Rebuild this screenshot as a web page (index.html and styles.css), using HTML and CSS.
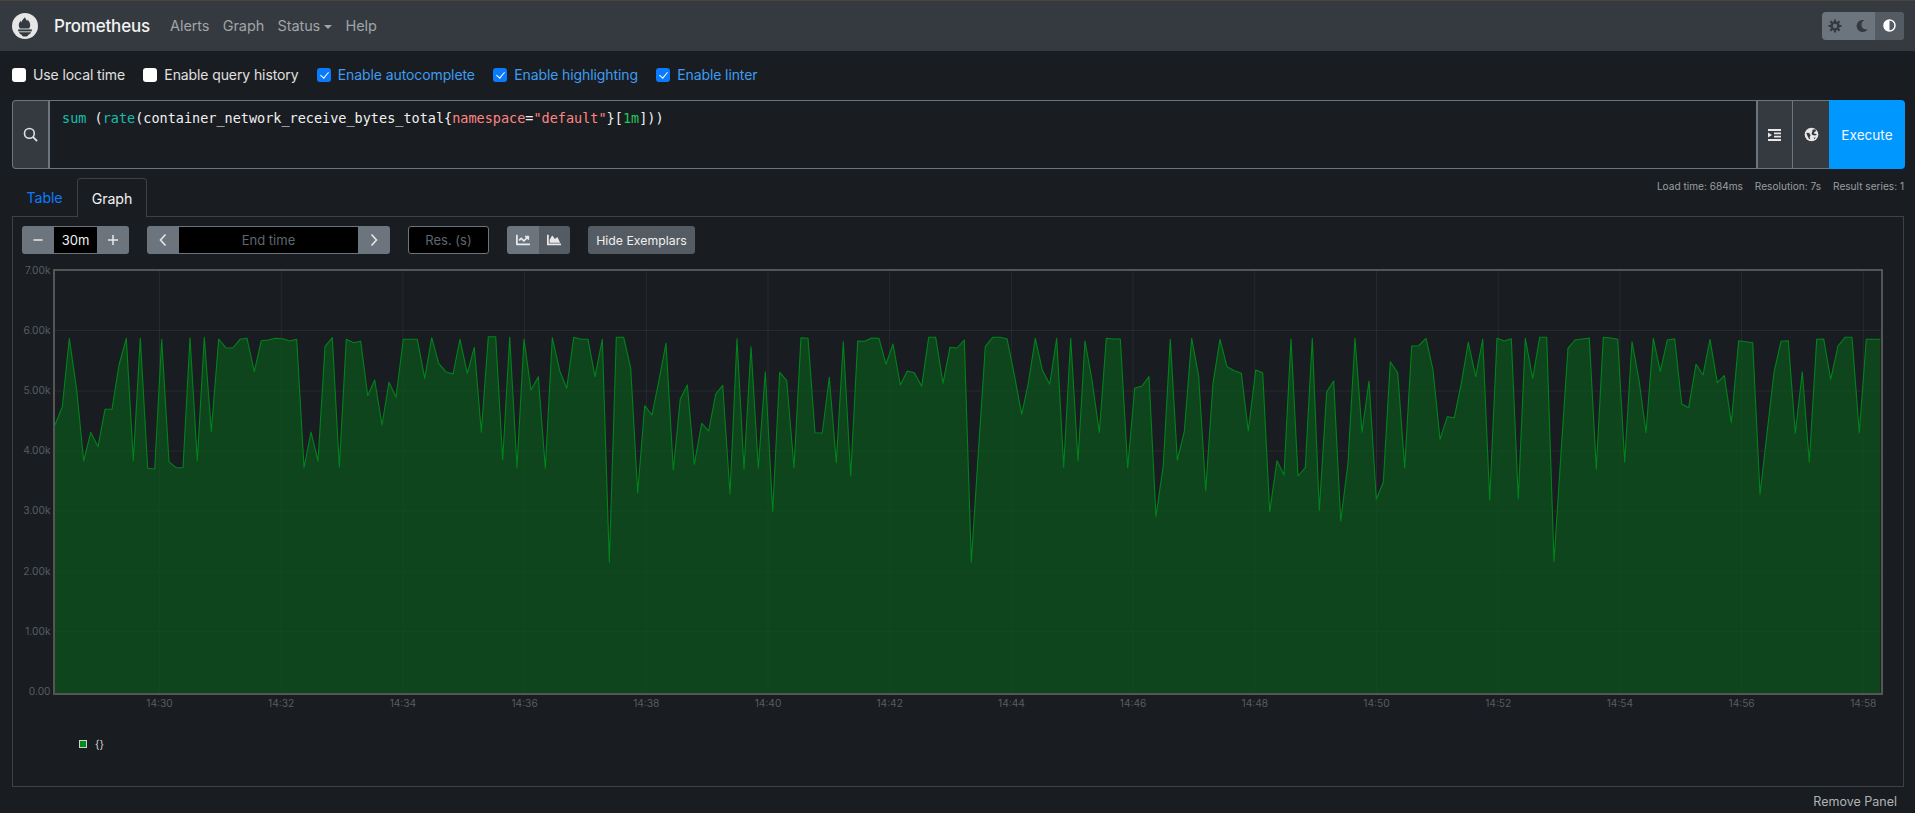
FILE: index.html
```html
<!DOCTYPE html>
<html lang="en">
<head>
<meta charset="utf-8">
<title>Prometheus Time Series Collection and Processing Server</title>
<link rel="stylesheet" href="styles.css">
</head>
<body>
<nav class="navbar">
  <a class="brand">
    <svg class="logo" viewBox="0 0 26 26" width="26" height="26">
      <circle cx="13" cy="13" r="13" fill="#e6e6e6"/>
      <path fill="#343a40" d="M13 4.2c.5 2 1.6 2.7 2.2 4 .3-.6.4-1.1.3-1.7 1.400 1.500 2.700 3.300 2.700 5.500 0 1.400-.5 2.500-1.100 3.600H8c-.7-1.100-1.200-2.200-1.200-3.600 0-1.700.9-3 1.900-4.300.1.800.3 1.300.7 1.800.2-2 1.500-3.300 3.600-5.300z"/>
      <rect x="6.200" y="16.400" width="13.600" height="2" fill="#343a40"/>
      <path fill="#343a40" d="M7 19.200h12c-.4 1.300-1.300 2.100-2.500 2.500-.6 1.200-1.800 1.900-3.500 1.900s-2.900-.7-3.500-1.900C8.300 21.300 7.400 20.500 7 19.200z"/>
    </svg>
    <span class="brand-name">Prometheus</span>
  </a>
  <a class="nav-link">Alerts</a>
  <a class="nav-link">Graph</a>
  <a class="nav-link">Status<i class="caret"></i></a>
  <a class="nav-link">Help</a>
  <div class="theme">
    <button class="theme-btn"><svg viewBox="0 0 16 16" width="14" height="14"><g stroke="#343a40" stroke-width="2.400"><path d="M8 .5v15M.5 8h15M2.700 2.700l10.600 10.600M13.300 2.700L2.700 13.300"/></g><circle cx="8" cy="8" r="5.400" fill="#343a40"/><circle cx="8" cy="8" r="2.500" fill="#6c757d"/></svg></button>
    <button class="theme-btn"><svg viewBox="0 0 512 512" width="12" height="12"><path fill="#343a40" d="M283.211 512c78.962 0 151.079-35.925 198.857-94.792 7.068-8.708-.639-21.43-11.562-19.35-124.203 23.654-238.262-71.576-238.262-196.954 0-72.222 38.662-138.635 101.498-174.394 9.686-5.512 7.25-20.197-3.756-22.23A258.156 258.156 0 0 0 283.211 0c-141.309 0-256 114.511-256 256 0 141.309 114.511 256 256 256z"/></svg></button>
    <button class="theme-btn theme-active"><svg viewBox="0 0 16 16" width="13" height="13"><circle cx="8" cy="8" r="6.800" fill="none" stroke="#fff" stroke-width="1.800"/><path fill="#fff" d="M8 1.200a6.800 6.800 0 0 0 0 13.600z"/></svg></button>
  </div>
</nav>

<main class="page">
  <div class="options">
    <label class="check"><input type="checkbox"><span>Use local time</span></label>
    <label class="check"><input type="checkbox"><span>Enable query history</span></label>
    <label class="check on"><input type="checkbox" checked><span>Enable autocomplete</span></label>
    <label class="check on"><input type="checkbox" checked><span>Enable highlighting</span></label>
    <label class="check on"><input type="checkbox" checked><span>Enable linter</span></label>
  </div>

  <div class="query">
    <div class="addon addon-search">
      <svg viewBox="0 0 16 16" width="15" height="15"><circle cx="6.800" cy="6.800" r="5.200" fill="none" stroke="#e0e0e0" stroke-width="1.700"/><path d="M10.600 10.600L15 15" stroke="#e0e0e0" stroke-width="2"/></svg>
    </div>
    <div class="code"><span class="fn">sum</span> (<span class="fn">rate</span>(container_network_receive_bytes_total{<span class="lbl">namespace</span>=<span class="str">"default"</span>}[<span class="num">1m</span>]))</div>
    <div class="addon addon-r">
      <svg viewBox="0 0 14 14" width="14" height="14"><path fill="#e8e8e8" d="M0 1h13v2H0zM6 4.500h7v1.700H6zM6 7.800h7v1.700H6zM0 11h13v2H0zM0 4.600L4 7 0 9.400z"/></svg>
    </div>
    <div class="addon addon-r addon-globe">
      <svg viewBox="0 0 16 16" width="15" height="15"><circle cx="8" cy="8" r="7.300" fill="#e8e8e8"/><path fill="#343a40" d="M2.500 6.500l2-.5 1.500 1 1 2-1 2 .7 2-1.500-.6-1.500-2.800zM9 3l3-.5 1 1.500-2 1.500-.5 1.500 2.500.500.500 1-2 .500-2.500-.5-1-1.500 1-2.500zM10.500 11.500l2-.5-1.500 2z"/></svg>
    </div>
    <button class="execute">Execute</button>
  </div>

  <div class="tabs-row">
    <div class="tabs">
      <a class="tab">Table</a>
      <a class="tab tab-active">Graph</a>
    </div>
    <div class="stats">
      <span>Load time: 684ms</span>
      <span>Resolution: 7s</span>
      <span>Result series: 1</span>
    </div>
  </div>

  <section class="panel">
    <div class="controls">
      <div class="group">
        <button class="btn btn-sq"><svg viewBox="0 0 12 12" width="12" height="12"><path d="M1.500 6h9" stroke="#e8e8e8" stroke-width="1.500"/></svg></button>
        <div class="field field-range">30m</div>
        <button class="btn btn-sq"><svg viewBox="0 0 12 12" width="12" height="12"><path d="M1 6h10M6 1v10" stroke="#e8e8e8" stroke-width="1.500"/></svg></button>
      </div>
      <div class="group">
        <button class="btn btn-sq"><svg viewBox="0 0 10 14" width="10" height="14"><path d="M7.500 1.500L2.500 7l5 5.500" fill="none" stroke="#e8e8e8" stroke-width="1.600"/></svg></button>
        <div class="field field-end">End time</div>
        <button class="btn btn-sq"><svg viewBox="0 0 10 14" width="10" height="14"><path d="M2.500 1.500L7.500 7l-5 5.500" fill="none" stroke="#e8e8e8" stroke-width="1.600"/></svg></button>
      </div>
      <div class="field field-res">Res. (s)</div>
      <div class="group">
        <button class="btn btn-stack"><svg viewBox="0 0 512 512" width="14" height="14"><path fill="#e8e8e8" d="M496 384H64V80c0-8.840-7.160-16-16-16H16C7.160 64 0 71.160 0 80v336c0 17.670 14.330 32 32 32h464c8.840 0 16-7.160 16-16v-32c0-8.840-7.160-16-16-16zM464 96H345.940c-21.380 0-32.090 25.850-16.970 40.970l32.400 32.400L288 242.750l-73.370-73.370c-12.500-12.500-32.760-12.500-45.250 0l-68.690 68.690c-6.250 6.250-6.250 16.380 0 22.630l22.620 22.620c6.250 6.250 16.380 6.250 22.630 0L192 237.250l73.370 73.370c12.500 12.500 32.760 12.500 45.250 0l96-96 32.400 32.400c15.120 15.120 40.970 4.410 40.970-16.970V112c.01-8.840-7.150-16-15.990-16z"/></svg></button>
        <button class="btn btn-stack btn-dark"><svg viewBox="0 0 512 512" width="14" height="14"><path fill="#e8e8e8" d="M500 384c6.600 0 12 5.400 12 12v40c0 6.600-5.400 12-12 12H12c-6.600 0-12-5.400-12-12V76c0-6.600 5.400-12 12-12h40c6.600 0 12 5.400 12 12v308h436zM372.700 159.500L288 216l-85.300-113.700c-5.100-6.800-15.500-6.300-19.900 1L96 248v104h384l-89.900-187.800c-3.200-6.500-11.400-8.700-17.400-4.700z"/></svg></button>
      </div>
      <button class="btn btn-dark btn-exemplars">Hide Exemplars</button>
    </div>

    <svg id="chart" class="chart" viewBox="13 262 1890 450" width="1890" height="450"></svg>

    <div class="legend">
      <i class="swatch"></i>
      <span class="series">{}</span>
    </div>
  </section>

  <div class="remove-row"><a class="remove">Remove Panel</a></div>
</main>
<script src="chart.js"></script>
</body>
</html>
```
FILE: styles.css
```css
* { box-sizing: border-box; }
html, body { margin: 0; padding: 0; }
body {
  width: 1915px;
  height: 813px;
  overflow: hidden;
  background: #191d21;
  color: #e8e8e8;
  font-family: Inter, "Liberation Sans", sans-serif;
  font-size: 14px;
}
button { font-family: inherit; border: 0; padding: 0; }

.navbar {
  display: flex;
  align-items: center;
  height: 51px;
  padding: 0 11px 1px 12px;
  background: #343a40;
  border-top: 1px solid #4a453a;
}
.brand { display: flex; align-items: center; margin-right: 13.500px; }
.logo { display: block; }
.brand-name { margin-left: 16px; font-size: 17px; font-weight: 500; color: #f2f2f2; letter-spacing: -0.2px; }
.nav-link { margin: 0 6.700px; font-size: 14.500px; color: #a0a4a8; letter-spacing: -0.1px; }
.caret {
  display: inline-block;
  margin-left: 4px;
  vertical-align: 2px;
  border-top: 4px solid #a0a4a8;
  border-left: 4px solid transparent;
  border-right: 4px solid transparent;
}
.theme { display: flex; margin-left: auto; height: 28px; border-radius: 4px; overflow: hidden; background: #6c757d; }
.theme-btn { display: flex; align-items: center; justify-content: center; width: 26.500px; background: transparent; }
.theme-active { width: 29px; background: #545b62; }

.page { padding: 0 10px 0 12px; }
.options { display: flex; align-items: center; height: 49px; padding-bottom: 2px; }
.check { display: flex; align-items: center; margin-right: 18.300px; color: #e0e0e0; font-size: 14px; letter-spacing: -0.1px; }
.check.on { color: #3f9cf0; }
.check span { margin-left: 7px; }
.check input {
  appearance: none;
  position: relative;
  width: 14px;
  height: 14px;
  margin: 0;
  background: #fff;
  border-radius: 3px;
}
.check input:checked { background: #0a7bff; }
.check input:checked::after {
  content: "";
  position: absolute;
  left: 5px;
  top: 2.500px;
  width: 4px;
  height: 7px;
  border: solid #fff;
  border-width: 0 1.600px 1.600px 0;
  transform: rotate(40deg);
}

.query { display: flex; height: 69px; }
.addon {
  display: flex;
  align-items: center;
  justify-content: center;
  background: #343a40;
  border: 1px solid #6c757d;
}
.addon-search { width: 38px; border-radius: 4px 0 0 4px; border-right-width: 2px; }
.code {
  flex: 1;
  padding: 9px 12px;
  border-top: 1px solid #6c757d;
  border-bottom: 1px solid #6c757d;
  font-family: "DejaVu Sans Mono", monospace;
  font-size: 13.500px;
  line-height: 17px;
  color: #f0f0f0;
  white-space: pre;
}
.fn { color: #14bfad; }
.lbl { color: #ff8585; }
.str { color: #ff8585; }
.num { color: #22c55e; }
.addon-r { width: 36px; border-left-width: 2px; border-right: 0; }
.addon-globe { width: 37px; border-left-width: 1px; }
.execute {
  width: 76px;
  background: #0097ff;
  color: #f2f8ff;
  font-size: 13.600px;
  border-radius: 0 4px 4px 0;
}

.tabs-row { display: flex; justify-content: space-between; align-items: flex-start; height: 47px; padding-top: 9px; }
.tabs { display: flex; height: 39px; position: relative; z-index: 1; }
.tab { display: flex; align-items: center; padding: 0 14.500px; color: #0a7bff; font-size: 14.200px; letter-spacing: -0.1px; }
.tab-active {
  width: 70px;
  justify-content: center;
  color: #f2f2f2;
  background: #191d21;
  border: 1px solid #3d4247;
  border-bottom: 0;
  border-radius: 4px 4px 0 0;
}
.stats { display: flex; gap: 12px; padding-top: 2px; padding-right: 1px; color: #9a9da0; font-size: 10.100px; }

.panel {
  height: 571px;
  width: 1892px;
  border: 1px solid #3d4247;
}
.controls { display: flex; align-items: center; height: 28px; margin: 9px 0 8px 9px; }
.group { display: flex; height: 28px; margin-right: 18px; }
.btn { display: flex; align-items: center; justify-content: center; height: 28px; background: #6c757d; color: #f0f0f0; font-size: 13px; }
.btn-sq { width: 32px; }
.group > :first-child { border-radius: 3px 0 0 3px; }
.group > :last-child { border-radius: 0 3px 3px 0; }
.field {
  display: flex;
  align-items: center;
  justify-content: center;
  height: 28px;
  background: #000;
  border: 1px solid #6c757d;
  font-size: 13px;
  color: #5f666d;
}
.field-range { width: 43px; color: #f2f2f2; border-width: 1px 0; }
.field-end { width: 179px; border-width: 1px 0; }
.field-res { width: 81px; margin-right: 18px; border-radius: 3px; }
.btn-stack { width: 31.500px; }
.btn-dark { background: #545b62; }
.btn-exemplars { width: 107px; border-radius: 3px; font-size: 12.300px; }

.chart { display: block; }
.chart text { font-family: Inter, "Liberation Sans", sans-serif; font-size: 10.200px; fill: #585c60; }
.grid { stroke: rgba(255,255,255,0.06); stroke-width: 1; }
.frame { fill: none; stroke: #555; stroke-width: 2; }
.area { fill: rgba(11,80,29,0.8); }
.line { fill: none; stroke: #00831a; stroke-width: 1.100; stroke-linejoin: round; }

.legend { display: flex; align-items: center; height: 14px; margin: 25px 0 0 66px; }
.swatch { display: block; width: 8px; height: 8px; background: #008a17; border: 1px solid #d0d0d0; }
.series { margin-left: 8px; font-size: 10.500px; color: #d8d8d8; }

.remove-row { display: flex; justify-content: flex-end; padding: 7px 8px 0 0; }
.remove { color: #b0b3b6; font-size: 12.500px; }
```
FILE: chart.js
```js
// Sampled series: each segment holds x,y pairs in 3x-scaled units from an x offset.
var segments = [
  { off: 40, pts: [45,315,67,260,88,55,110,210,131,423,152,337,174,380,195,268,216,268,237,135,259,55,280,422,301,55,323,445,344,447,365,58,387,425,408,443,429,443,450,53,472,422,493,52,514,335,536,57,557,83,578,84,600,58,621,55,643,155,664,62,685,60,706,55,728,56,749,63,770,58,792,443,813,336,834,423,855,80,877,53,898,442,919,58,941,68,962,64,983,227,1004,180,1026,315,1047,187,1068,232,1090,58,1111,58,1132,58,1154,175,1175,53,1196,130,1217,155,1239,162,1260,58,1282,160,1303,82,1324,337,1345,50,1367,50,1388,420,1409,52,1431,443,1452,58,1473,210,1495,170] },
  { off: 520, pts: [76,445,97,53,119,152,140,205,161,52,183,58,204,58,225,170,247,58,268,727,289,52,311,52,332,145,353,518,374,257,396,285,417,180,438,70,460,450,481,237,502,195,523,433,545,310,566,333,587,222,608,196,630,522,651,56,672,448,693,80,715,445,736,155,758,575,779,157,800,182,822,443,843,53,864,55,885,338,907,339,928,172,949,428,970,65,992,468,1013,63,1034,64,1055,54,1077,55,1098,133,1119,72,1141,195,1162,153,1183,158,1205,199,1226,52,1247,52,1269,190,1290,82,1311,84,1333,60,1354,727,1375,400,1396,80,1418,52,1439,52,1461,56,1482,160] },
  { off: 1000, pts: [65,283,85,190,106,55,127,150,149,193,170,55,191,442,212,55,234,423,255,63,276,180,298,338,319,55,340,57,361,57,383,443,404,205,426,198,447,170,468,590,490,435,511,58,532,420,553,335,575,55,596,170,617,512,639,190,660,58,681,140,703,152,724,160,745,333,767,150,788,158,809,575,831,422,852,465,873,57,894,468,916,443,937,55,958,572,980,215,1001,183,1022,603,1044,430,1065,55,1086,337,1107,183,1129,538,1150,487,1171,125,1193,158,1214,443,1235,78,1256,77,1278,55,1299,150,1320,358,1342,290,1363,293,1384,190,1405,67,1427,170,1448,58,1469,540] },
  { off: 1450, pts: [141,55,163,63,184,56,205,537,226,55,248,175,269,52,290,52,312,725,333,400,354,85,375,60,397,57,418,54,439,448,460,52,482,54,503,58,524,427,546,65,567,180,588,338,610,55,631,155,652,60,674,56,695,252,716,263,738,133,759,165,780,58,802,188,823,167,844,308,866,62,887,65,908,68,930,523,951,340,972,158,993,64,1015,62,1036,340,1057,155,1078,427,1100,58,1121,57,1142,178,1164,78,1185,52,1206,52,1228,338,1249,58,1270,58,1291,58] }
];

var NS = "http://www.w3.org/2000/svg";
var svg = document.getElementById("chart");
var LEFT = 54, RIGHT = 1882, TOP = 270, BOTTOM = 694;

function add(tag, attrs, text) {
  var el = document.createElementNS(NS, tag);
  for (var k in attrs) el.setAttribute(k, attrs[k]);
  if (text) el.textContent = text;
  svg.appendChild(el);
  return el;
}

var yLabels = ["0.00", "1.00k", "2.00k", "3.00k", "4.00k", "5.00k", "6.00k", "7.00k"];
var yPos = [692, 631.5, 571.5, 511, 451, 391, 330.5, 270.5];
yLabels.forEach(function (t, i) {
  if (i > 0 && i < 7) add("line", { "class": "grid", x1: LEFT, x2: RIGHT, y1: yPos[i], y2: yPos[i] });
  add("text", { x: 50.5, y: yPos[i] + 3, "text-anchor": "end" }, t);
});

for (var m = 0; m < 15; m++) {
  var x = 159.5 + m * 121.7;
  var label = "14:" + (30 + m * 2);
  add("line", { "class": "grid", x1: x, x2: x, y1: TOP, y2: BOTTOM });
  add("text", { x: x, y: 707, "text-anchor": "middle" }, label);
}

var pts = [];
segments.forEach(function (s) {
  for (var i = 0; i < s.pts.length; i += 2) {
    pts.push((s.off + s.pts[i] / 3).toFixed(1) + "," + (320 + s.pts[i + 1] / 3).toFixed(1));
  }
});
var firstX = pts[0].split(",")[0], lastX = pts[pts.length - 1].split(",")[0];

add("polygon", { "class": "area", points: firstX + "," + BOTTOM + " " + pts.join(" ") + " " + lastX + "," + BOTTOM });
add("polyline", { "class": "line", points: pts.join(" ") });
add("rect", { "class": "frame", x: LEFT, y: TOP, width: RIGHT - LEFT, height: BOTTOM - TOP });
```
